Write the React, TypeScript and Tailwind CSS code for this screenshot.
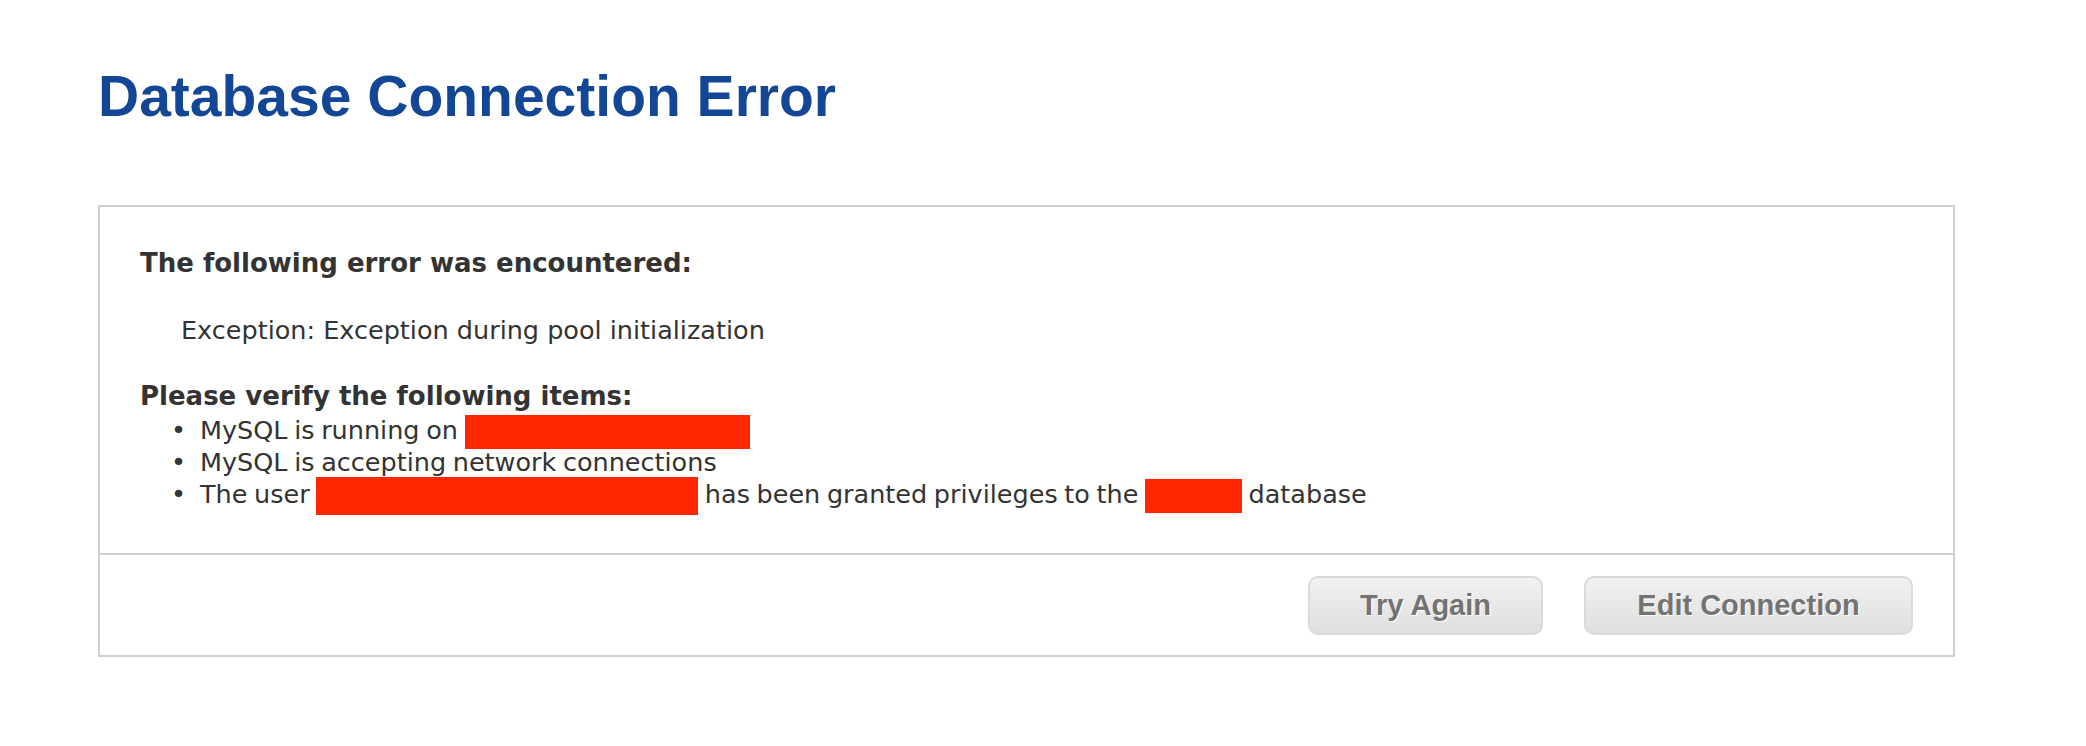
import React from "react";

function Redacted({ width, height }: { width: number; height: number }) {
  // keep the box from stretching the line
  const pull = -Math.ceil((height - 22) / 2);
  return (
    <span
      className="inline-block bg-[#ff2600] align-middle"
      style={{ width, height, marginTop: pull, marginBottom: pull }}
    />
  );
}

function Button({ label, width }: { label: string; width: number }) {
  return (
    <button
      type="button"
      className="h-[59px] rounded-[10px] border-2 border-[#dadada] bg-gradient-to-b from-[#f1f1f1] to-[#dfdfdf] font-['Liberation_Sans',Arial,sans-serif] text-[29px] font-bold text-[#737373] [text-shadow:1px_1px_0_#ffffff]"
      style={{ width }}
    >
      {label}
    </button>
  );
}

function Item({ children }: { children: React.ReactNode }) {
  return (
    <li className="whitespace-nowrap">
      <span className="inline-block w-[29px]">•</span>
      {children}
    </li>
  );
}

export default function App() {
  return (
    <div className="min-h-[746px] w-full bg-white pl-[98px] pr-[131px] pt-[64px]">
      <h1 className="font-['Liberation_Sans',Arial,sans-serif] text-[57px] font-bold leading-[64px] text-[#134796]">
        Database Connection Error
      </h1>

      <div className="mt-[77px] border-2 border-[#cfcfcf] font-['DejaVu_Sans',Verdana,sans-serif] text-[#333333]">
        <div className="px-[40px] pb-[43px] pt-[40px]">
          <h2 className="text-[26px] font-bold leading-[32px]">The following error was encountered:</h2>
          <p className="mt-[35px] pl-[41px] text-[25.5px] leading-[32px]">
            Exception: Exception during pool initialization
          </p>
          <h2 className="mt-[34px] text-[26px] font-bold leading-[32px]">Please verify the following items:</h2>
          <ul className="mt-[2px] list-none pl-[31px] text-[25.5px] leading-[32px] [word-spacing:-1.5px]">
            <Item>
              MySQL is running on <Redacted width={285} height={34} />
            </Item>
            <Item>MySQL is accepting network connections</Item>
            <Item>
              The user <Redacted width={382} height={38} /> has been granted privileges to the{" "}
              <Redacted width={97} height={34} /> database
            </Item>
          </ul>
        </div>
        <div className="flex justify-end gap-[41px] border-t-2 border-[#cfcfcf] pb-[20px] pr-[40px] pt-[21px]">
          <Button label="Try Again" width={235} />
          <Button label="Edit Connection" width={329} />
        </div>
      </div>
    </div>
  );
}
